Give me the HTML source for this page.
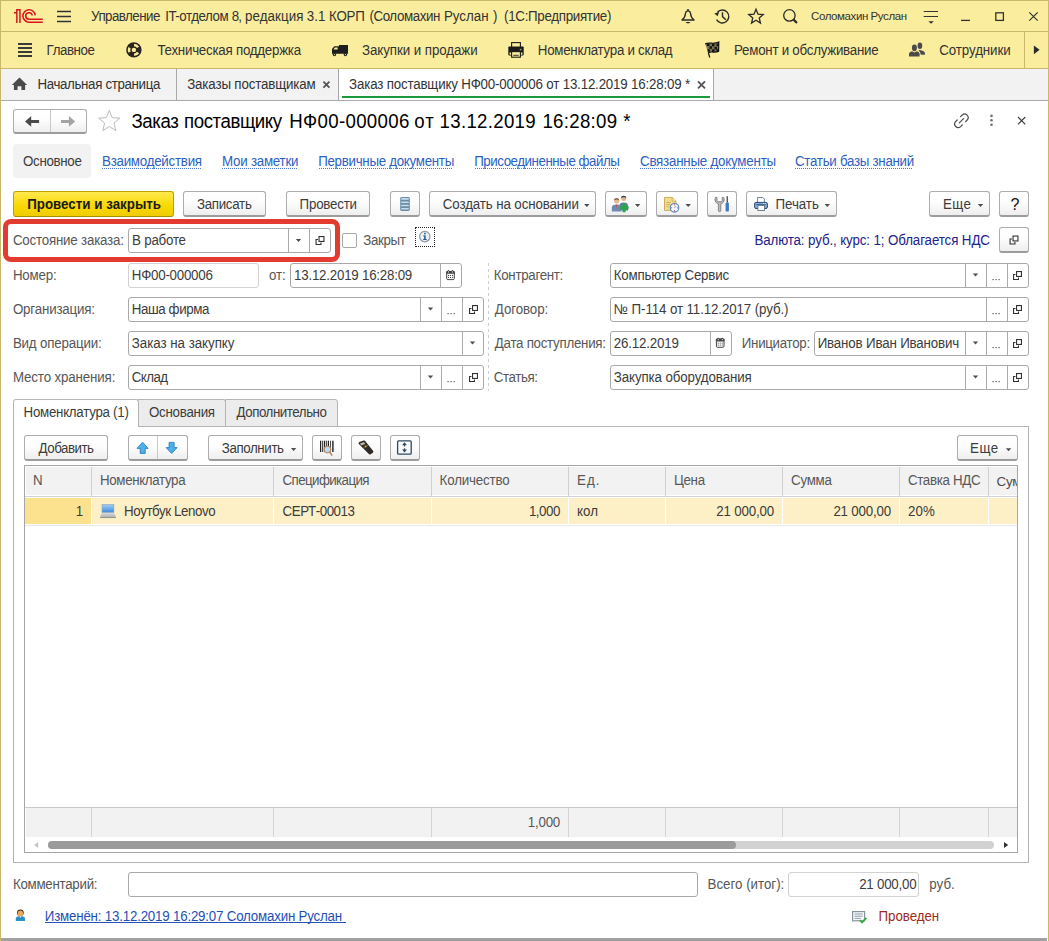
<!DOCTYPE html><html><head><meta charset="utf-8"><style>
html,body{margin:0;padding:0;}
body{width:1049px;height:941px;position:relative;overflow:hidden;background:#fff;font-family:"Liberation Sans",sans-serif;}
.t{position:absolute;white-space:nowrap;}
.b{position:absolute;box-sizing:border-box;}
svg.ov{position:absolute;left:0;top:0;}
.btn{border:1px solid #adadad;border-bottom:2px solid #9c9c9c;border-radius:3px;background:linear-gradient(#ffffff 0,#fdfdfd 45%,#eeeeee 100%);}
.inp{border:1px solid #a9a9a9;border-radius:3px;background:#fff;}
.inp.lt{border-color:#d2d2d2;}
</style></head><body>
<div class="b" style="left:0px;top:0px;width:1049px;height:1px;background:#c9b86c"></div>
<div class="b" style="left:0px;top:0px;width:1px;height:941px;background:#c9b86c"></div>
<div class="b" style="left:1048px;top:0px;width:1px;height:941px;background:#c9b86c"></div>
<div class="b" style="left:1px;top:1px;width:1047px;height:30px;background:#fbed9e"></div>
<div class="b" style="left:1px;top:31px;width:1047px;height:1px;background:#c9b86c"></div>
<div class="b" style="left:1px;top:32px;width:1047px;height:36px;background:#fbed9e"></div>
<div class="b" style="left:1px;top:68px;width:1047px;height:1px;background:#c9b86c"></div>
<div class="b" style="left:1024px;top:32px;width:1px;height:36px;background:#c9b86c"></div>
<div class="b" style="left:1px;top:69px;width:1047px;height:31px;background:#f2f2f2"></div>
<div class="b" style="left:339px;top:69px;width:374px;height:31px;background:#fff"></div>
<div class="b" style="left:176px;top:69px;width:1px;height:31px;background:#a8a8a8"></div>
<div class="b" style="left:338px;top:69px;width:1px;height:31px;background:#a8a8a8"></div>
<div class="b" style="left:713px;top:69px;width:1px;height:31px;background:#a8a8a8"></div>
<div class="b" style="left:342px;top:96px;width:368px;height:2px;background:#1c9a3c"></div>
<div class="b" style="left:1px;top:100px;width:1047px;height:1px;background:#aaaaaa"></div>
<div class="b" style="left:1px;top:938px;width:1046px;height:3px;background:#a0a0a0"></div>
<div class="b btn" style="left:13px;top:109px;width:74px;height:25px;"></div>
<div class="b" style="left:50px;top:110px;width:1px;height:22px;background:#c8c8c8"></div>
<div class="b" style="left:13px;top:144px;width:78px;height:34px;background:#f2f2f2;border-radius:4px"></div>
<div class="b" style="left:102px;top:168px;width:99px;height:1px;background:repeating-linear-gradient(90deg,#4a74c8 0 1px,transparent 1px 2px)"></div>
<div class="b" style="left:222px;top:168px;width:75px;height:1px;background:repeating-linear-gradient(90deg,#4a74c8 0 1px,transparent 1px 2px)"></div>
<div class="b" style="left:319px;top:168px;width:134px;height:1px;background:repeating-linear-gradient(90deg,#4a74c8 0 1px,transparent 1px 2px)"></div>
<div class="b" style="left:475px;top:168px;width:144px;height:1px;background:repeating-linear-gradient(90deg,#4a74c8 0 1px,transparent 1px 2px)"></div>
<div class="b" style="left:640px;top:168px;width:134px;height:1px;background:repeating-linear-gradient(90deg,#4a74c8 0 1px,transparent 1px 2px)"></div>
<div class="b" style="left:795px;top:168px;width:118px;height:1px;background:repeating-linear-gradient(90deg,#4a74c8 0 1px,transparent 1px 2px)"></div>
<div class="b" style="left:13px;top:191px;width:161px;height:26px;border:1px solid #bfa200;border-bottom-color:#a88e00;border-radius:3px;background:linear-gradient(#ffe94f,#f8d800 60%,#efcc00)"></div>
<div class="b btn" style="left:183px;top:191px;width:83px;height:26px;"></div>
<div class="b btn" style="left:286px;top:191px;width:84px;height:26px;"></div>
<div class="b btn" style="left:390px;top:191px;width:30px;height:26px;"></div>
<div class="b btn" style="left:429px;top:191px;width:167px;height:26px;"></div>
<div class="b btn" style="left:605px;top:191px;width:42px;height:26px;"></div>
<div class="b btn" style="left:656px;top:191px;width:42px;height:26px;"></div>
<div class="b btn" style="left:707px;top:191px;width:30px;height:26px;"></div>
<div class="b btn" style="left:746px;top:191px;width:91px;height:26px;"></div>
<div class="b btn" style="left:929px;top:191px;width:61px;height:26px;"></div>
<div class="b btn" style="left:999px;top:191px;width:30px;height:26px;"></div>
<div class="b" style="left:3px;top:219px;width:337px;height:43px;border:5px solid #e43b30;border-radius:8px"></div>
<div class="b inp" style="left:128px;top:228px;width:203px;height:25px;"></div>
<div class="b" style="left:288px;top:229px;width:1px;height:23px;background:#ababab"></div>
<div class="b" style="left:309px;top:229px;width:1px;height:23px;background:#ababab"></div>
<div class="b" style="left:342px;top:233px;width:15px;height:15px;border:1px solid #a9a9a9;border-radius:2px;background:#fff"></div>
<div class="b" style="left:415px;top:227px;width:20px;height:20px;border:1px dotted #222"></div>
<div class="b btn" style="left:999px;top:227px;width:30px;height:26px;"></div>
<div class="b inp lt" style="left:128px;top:263px;width:131px;height:25px;"></div>
<div class="b inp" style="left:290px;top:263px;width:172px;height:25px;"></div>
<div class="b" style="left:440px;top:264px;width:1px;height:23px;background:#ababab"></div>
<div class="b inp" style="left:128px;top:297px;width:356px;height:25px;"></div>
<div class="b" style="left:420px;top:298px;width:1px;height:23px;background:#ababab"></div>
<div class="b" style="left:441px;top:298px;width:1px;height:23px;background:#ababab"></div>
<div class="b" style="left:462px;top:298px;width:1px;height:23px;background:#ababab"></div>
<div class="b inp" style="left:128px;top:331px;width:356px;height:25px;"></div>
<div class="b" style="left:462px;top:332px;width:1px;height:23px;background:#ababab"></div>
<div class="b inp" style="left:128px;top:365px;width:356px;height:25px;"></div>
<div class="b" style="left:420px;top:366px;width:1px;height:23px;background:#ababab"></div>
<div class="b" style="left:441px;top:366px;width:1px;height:23px;background:#ababab"></div>
<div class="b" style="left:462px;top:366px;width:1px;height:23px;background:#ababab"></div>
<div class="b" style="left:488px;top:263px;width:1px;height:128px;background:repeating-linear-gradient(180deg,#cdcdcd 0 3px,transparent 3px 6px)"></div>
<div class="b inp" style="left:610px;top:263px;width:419px;height:25px;"></div>
<div class="b" style="left:965px;top:264px;width:1px;height:23px;background:#ababab"></div>
<div class="b" style="left:986px;top:264px;width:1px;height:23px;background:#ababab"></div>
<div class="b" style="left:1007px;top:264px;width:1px;height:23px;background:#ababab"></div>
<div class="b inp" style="left:610px;top:297px;width:419px;height:25px;"></div>
<div class="b" style="left:986px;top:298px;width:1px;height:23px;background:#ababab"></div>
<div class="b" style="left:1007px;top:298px;width:1px;height:23px;background:#ababab"></div>
<div class="b inp" style="left:610px;top:331px;width:122px;height:25px;"></div>
<div class="b" style="left:710px;top:332px;width:1px;height:23px;background:#ababab"></div>
<div class="b inp" style="left:814px;top:331px;width:215px;height:25px;"></div>
<div class="b" style="left:965px;top:332px;width:1px;height:23px;background:#ababab"></div>
<div class="b" style="left:986px;top:332px;width:1px;height:23px;background:#ababab"></div>
<div class="b" style="left:1007px;top:332px;width:1px;height:23px;background:#ababab"></div>
<div class="b inp" style="left:610px;top:365px;width:419px;height:25px;"></div>
<div class="b" style="left:965px;top:366px;width:1px;height:23px;background:#ababab"></div>
<div class="b" style="left:986px;top:366px;width:1px;height:23px;background:#ababab"></div>
<div class="b" style="left:1007px;top:366px;width:1px;height:23px;background:#ababab"></div>
<div class="b" style="left:13px;top:426px;width:1016px;height:437px;border:1px solid #b4b4b4;border-top:none"></div>
<div class="b" style="left:138px;top:426px;width:891px;height:1px;background:#b4b4b4"></div>
<div class="b" style="left:138px;top:399px;width:88px;height:28px;border:1px solid #b4b4b4;border-left:none;border-top-right-radius:3px;background:#ececec"></div>
<div class="b" style="left:225px;top:399px;width:113px;height:28px;border:1px solid #b4b4b4;border-top-right-radius:3px;background:#ececec"></div>
<div class="b" style="left:13px;top:399px;width:126px;height:28px;border:1px solid #b4b4b4;border-bottom:none;border-top-left-radius:3px;border-top-right-radius:3px;background:#fff"></div>
<div class="b btn" style="left:24px;top:435px;width:84px;height:26px;"></div>
<div class="b btn" style="left:128px;top:435px;width:60px;height:26px;"></div>
<div class="b" style="left:157px;top:436px;width:1px;height:23px;background:#c8c8c8"></div>
<div class="b btn" style="left:208px;top:435px;width:95px;height:26px;"></div>
<div class="b btn" style="left:312px;top:435px;width:30px;height:26px;"></div>
<div class="b btn" style="left:351px;top:435px;width:30px;height:26px;"></div>
<div class="b btn" style="left:390px;top:435px;width:30px;height:26px;"></div>
<div class="b btn" style="left:957px;top:435px;width:61px;height:26px;"></div>
<div class="b" style="left:24px;top:465px;width:994px;height:388px;border:1px solid #a6a6a6;background:#fff"></div>
<div class="b" style="left:26px;top:467px;width:991px;height:28px;background:#f2f2f2"></div>
<div class="b" style="left:25px;top:496px;width:992px;height:1px;background:#d4d4d4"></div>
<div class="b" style="left:91px;top:467px;width:1px;height:29px;background:#d0d0d0"></div>
<div class="b" style="left:273px;top:467px;width:1px;height:29px;background:#d0d0d0"></div>
<div class="b" style="left:431px;top:467px;width:1px;height:29px;background:#d0d0d0"></div>
<div class="b" style="left:568px;top:467px;width:1px;height:29px;background:#d0d0d0"></div>
<div class="b" style="left:665px;top:467px;width:1px;height:29px;background:#d0d0d0"></div>
<div class="b" style="left:782px;top:467px;width:1px;height:29px;background:#d0d0d0"></div>
<div class="b" style="left:899px;top:467px;width:1px;height:29px;background:#d0d0d0"></div>
<div class="b" style="left:988px;top:467px;width:1px;height:29px;background:#d0d0d0"></div>
<div class="b" style="left:25px;top:498px;width:992px;height:26px;background:#fdf0c6"></div>
<div class="b" style="left:25px;top:498px;width:66px;height:26px;background:#fce28f"></div>
<div class="b" style="left:91px;top:498px;width:1px;height:26px;background:#ffffff"></div>
<div class="b" style="left:273px;top:498px;width:1px;height:26px;background:#ffffff"></div>
<div class="b" style="left:431px;top:498px;width:1px;height:26px;background:#ffffff"></div>
<div class="b" style="left:568px;top:498px;width:1px;height:26px;background:#ffffff"></div>
<div class="b" style="left:665px;top:498px;width:1px;height:26px;background:#ffffff"></div>
<div class="b" style="left:782px;top:498px;width:1px;height:26px;background:#ffffff"></div>
<div class="b" style="left:899px;top:498px;width:1px;height:26px;background:#ffffff"></div>
<div class="b" style="left:988px;top:498px;width:1px;height:26px;background:#ffffff"></div>
<div class="b" style="left:25px;top:525px;width:992px;height:1px;background:#e8e8e8"></div>
<div class="b" style="left:989px;top:467px;width:28px;height:28px;background:#f2f2f2;overflow:hidden"></div>
<div style="position:absolute;left:989px;top:467px;width:28px;height:28px;overflow:hidden"><div class="t" style="left:7.5px;top:7px;font-size:13.33px;line-height:15px;color:#4d4d4d;letter-spacing:-0.2px">Сумма НДС</div></div>
<div class="b" style="left:25px;top:807px;width:992px;height:1px;background:#c8c8c8"></div>
<div class="b" style="left:26px;top:808px;width:991px;height:29px;background:#f2f2f2"></div>
<div class="b" style="left:91px;top:808px;width:1px;height:29px;background:#d4d4d4"></div>
<div class="b" style="left:273px;top:808px;width:1px;height:29px;background:#d4d4d4"></div>
<div class="b" style="left:431px;top:808px;width:1px;height:29px;background:#d4d4d4"></div>
<div class="b" style="left:568px;top:808px;width:1px;height:29px;background:#d4d4d4"></div>
<div class="b" style="left:665px;top:808px;width:1px;height:29px;background:#d4d4d4"></div>
<div class="b" style="left:782px;top:808px;width:1px;height:29px;background:#d4d4d4"></div>
<div class="b" style="left:899px;top:808px;width:1px;height:29px;background:#d4d4d4"></div>
<div class="b" style="left:988px;top:808px;width:1px;height:29px;background:#d4d4d4"></div>
<div class="b" style="left:48px;top:841px;width:946px;height:8px;background:#d2d2d2;border-radius:4px"></div>
<div class="b" style="left:48px;top:841px;width:688px;height:8px;background:#9b9b9b;border-radius:4px"></div>
<div class="b inp" style="left:128px;top:872px;width:570px;height:25px;"></div>
<div class="b inp lt" style="left:788px;top:872px;width:131px;height:25px;"></div>
<div class="b" style="left:45px;top:922px;width:301px;height:1px;background:#2454b8"></div>
<div class="t" style="left:91.10px;top:9px;font-size:13.33px;line-height:15px;color:#333;font-weight:normal;letter-spacing:-0.544px;font-family:'Liberation Sans';transform:scaleY(1.07);transform-origin:0 12px;">Управление</div>
<div class="t" style="left:165.20px;top:9px;font-size:13.33px;line-height:15px;color:#333;font-weight:normal;letter-spacing:-0.467px;font-family:'Liberation Sans';transform:scaleY(1.07);transform-origin:0 12px;">IT-отделом</div>
<div class="t" style="left:231.80px;top:9px;font-size:13.33px;line-height:15px;color:#333;font-weight:normal;letter-spacing:-1.000px;font-family:'Liberation Sans';transform:scaleY(1.07);transform-origin:0 12px;">8,</div>
<div class="t" style="left:245.00px;top:9px;font-size:13.33px;line-height:15px;color:#333;font-weight:normal;letter-spacing:0.086px;font-family:'Liberation Sans';transform:scaleY(1.07);transform-origin:0 12px;">редакция</div>
<div class="t" style="left:306.80px;top:9px;font-size:13.33px;line-height:15px;color:#333;font-weight:normal;letter-spacing:0.050px;font-family:'Liberation Sans';transform:scaleY(1.07);transform-origin:0 12px;">3.1</div>
<div class="t" style="left:329.10px;top:9px;font-size:13.33px;line-height:15px;color:#333;font-weight:normal;letter-spacing:-0.233px;font-family:'Liberation Sans';transform:scaleY(1.07);transform-origin:0 12px;">КОРП</div>
<div class="t" style="left:369.40px;top:9px;font-size:13.33px;line-height:15px;color:#333;font-weight:normal;letter-spacing:-0.400px;font-family:'Liberation Sans';transform:scaleY(1.07);transform-origin:0 12px;">(Соломахин</div>
<div class="t" style="left:444.00px;top:9px;font-size:13.33px;line-height:15px;color:#333;font-weight:normal;letter-spacing:-0.020px;font-family:'Liberation Sans';transform:scaleY(1.07);transform-origin:0 12px;">Руслан</div>
<div class="t" style="left:493.10px;top:9px;font-size:13.33px;line-height:15px;color:#333;font-weight:normal;letter-spacing:-0.230px;font-family:'Liberation Sans';transform:scaleY(1.07);transform-origin:0 12px;">)</div>
<div class="t" style="left:504.10px;top:9px;font-size:13.33px;line-height:15px;color:#333;font-weight:normal;letter-spacing:-0.300px;font-family:'Liberation Sans';transform:scaleY(1.07);transform-origin:0 12px;">(1С:Предприятие)</div>
<div class="t" style="left:811.10px;top:10px;font-size:11.5px;line-height:12px;color:#333;font-weight:normal;letter-spacing:-0.420px;font-family:'Liberation Sans';">Соломахин Руслан</div>
<div class="t" style="left:46.60px;top:43px;font-size:13.33px;line-height:15px;color:#333;font-weight:normal;letter-spacing:-0.433px;font-family:'Liberation Sans';transform:scaleY(1.07);transform-origin:0 12px;">Главное</div>
<div class="t" style="left:157.40px;top:43px;font-size:13.33px;line-height:15px;color:#333;font-weight:normal;letter-spacing:-0.245px;font-family:'Liberation Sans';transform:scaleY(1.07);transform-origin:0 12px;">Техническая поддержка</div>
<div class="t" style="left:362.00px;top:43px;font-size:13.33px;line-height:15px;color:#333;font-weight:normal;letter-spacing:-0.069px;font-family:'Liberation Sans';transform:scaleY(1.07);transform-origin:0 12px;">Закупки и продажи</div>
<div class="t" style="left:537.80px;top:43px;font-size:13.33px;line-height:15px;color:#333;font-weight:normal;letter-spacing:-0.268px;font-family:'Liberation Sans';transform:scaleY(1.07);transform-origin:0 12px;">Номенклатура и склад</div>
<div class="t" style="left:734.00px;top:43px;font-size:13.33px;line-height:15px;color:#333;font-weight:normal;letter-spacing:-0.250px;font-family:'Liberation Sans';transform:scaleY(1.07);transform-origin:0 12px;">Ремонт и обслуживание</div>
<div class="t" style="left:939.20px;top:43px;font-size:13.33px;line-height:15px;color:#333;font-weight:normal;letter-spacing:-0.078px;font-family:'Liberation Sans';transform:scaleY(1.07);transform-origin:0 12px;">Сотрудники</div>
<div class="t" style="left:37.40px;top:77px;font-size:13.33px;line-height:15px;color:#333;font-weight:normal;letter-spacing:-0.353px;font-family:'Liberation Sans';transform:scaleY(1.07);transform-origin:0 12px;">Начальная страница</div>
<div class="t" style="left:187.20px;top:77px;font-size:13.33px;line-height:15px;color:#333;font-weight:normal;letter-spacing:-0.153px;font-family:'Liberation Sans';transform:scaleY(1.07);transform-origin:0 12px;">Заказы поставщикам</div>
<div class="t" style="left:349.10px;top:77px;font-size:13.33px;line-height:15px;color:#333;font-weight:normal;letter-spacing:-0.179px;font-family:'Liberation Sans';transform:scaleY(1.07);transform-origin:0 12px;">Заказ поставщику НФ00-000006 от 13.12.2019 16:28:09 *</div>
<div class="t" style="left:131.40px;top:111px;font-size:18.67px;line-height:21px;color:#000;font-weight:normal;letter-spacing:-0.375px;font-family:'Liberation Sans';transform:scaleY(1.07);transform-origin:0 17px;">Заказ</div>
<div class="t" style="left:184.10px;top:111px;font-size:18.67px;line-height:21px;color:#000;font-weight:normal;letter-spacing:-0.433px;font-family:'Liberation Sans';transform:scaleY(1.07);transform-origin:0 17px;">поставщику</div>
<div class="t" style="left:289.30px;top:111px;font-size:18.67px;line-height:21px;color:#000;font-weight:normal;letter-spacing:0.310px;font-family:'Liberation Sans';transform:scaleY(1.07);transform-origin:0 17px;">НФ00-000006</div>
<div class="t" style="left:414.30px;top:111px;font-size:18.67px;line-height:21px;color:#000;font-weight:normal;letter-spacing:0.900px;font-family:'Liberation Sans';transform:scaleY(1.07);transform-origin:0 17px;">от</div>
<div class="t" style="left:439.60px;top:111px;font-size:18.67px;line-height:21px;color:#000;font-weight:normal;letter-spacing:0.300px;font-family:'Liberation Sans';transform:scaleY(1.07);transform-origin:0 17px;">13.12.2019</div>
<div class="t" style="left:542.40px;top:111px;font-size:18.67px;line-height:21px;color:#000;font-weight:normal;letter-spacing:0.300px;font-family:'Liberation Sans';transform:scaleY(1.07);transform-origin:0 17px;">16:28:09</div>
<div class="t" style="left:623.30px;top:111px;font-size:18.67px;line-height:21px;color:#000;font-weight:normal;letter-spacing:0.000px;font-family:'Liberation Sans';transform:scaleY(1.07);transform-origin:0 17px;">*</div>
<div class="t" style="left:23.00px;top:154px;font-size:13.33px;line-height:15px;color:#3c3c3c;font-weight:normal;letter-spacing:-0.314px;font-family:'Liberation Sans';transform:scaleY(1.07);transform-origin:0 12px;">Основное</div>
<div class="t" style="left:102.00px;top:154px;font-size:13.33px;line-height:15px;color:#2d5fc2;font-weight:normal;letter-spacing:-0.246px;font-family:'Liberation Sans';transform:scaleY(1.07);transform-origin:0 12px;">Взаимодействия</div>
<div class="t" style="left:222.10px;top:154px;font-size:13.33px;line-height:15px;color:#2d5fc2;font-weight:normal;letter-spacing:-0.250px;font-family:'Liberation Sans';transform:scaleY(1.07);transform-origin:0 12px;">Мои заметки</div>
<div class="t" style="left:318.20px;top:154px;font-size:13.33px;line-height:15px;color:#2d5fc2;font-weight:normal;letter-spacing:-0.289px;font-family:'Liberation Sans';transform:scaleY(1.07);transform-origin:0 12px;">Первичные документы</div>
<div class="t" style="left:474.20px;top:154px;font-size:13.33px;line-height:15px;color:#2d5fc2;font-weight:normal;letter-spacing:-0.453px;font-family:'Liberation Sans';transform:scaleY(1.07);transform-origin:0 12px;">Присоединенные файлы</div>
<div class="t" style="left:640.00px;top:154px;font-size:13.33px;line-height:15px;color:#2d5fc2;font-weight:normal;letter-spacing:-0.217px;font-family:'Liberation Sans';transform:scaleY(1.07);transform-origin:0 12px;">Связанные документы</div>
<div class="t" style="left:795.00px;top:154px;font-size:13.33px;line-height:15px;color:#2d5fc2;font-weight:normal;letter-spacing:-0.282px;font-family:'Liberation Sans';transform:scaleY(1.07);transform-origin:0 12px;">Статьи базы знаний</div>
<div class="t" style="left:27.20px;top:197px;font-size:13.33px;line-height:15px;color:#1a1a1a;font-weight:bold;letter-spacing:0.012px;font-family:'Liberation Sans';transform:scaleY(1.07);transform-origin:0 12px;">Провести и закрыть</div>
<div class="t" style="left:196.90px;top:197px;font-size:13.33px;line-height:15px;color:#3c3c3c;font-weight:normal;letter-spacing:-0.286px;font-family:'Liberation Sans';transform:scaleY(1.07);transform-origin:0 12px;">Записать</div>
<div class="t" style="left:299.60px;top:197px;font-size:13.33px;line-height:15px;color:#3c3c3c;font-weight:normal;letter-spacing:-0.229px;font-family:'Liberation Sans';transform:scaleY(1.07);transform-origin:0 12px;">Провести</div>
<div class="t" style="left:442.80px;top:197px;font-size:13.33px;line-height:15px;color:#3c3c3c;font-weight:normal;letter-spacing:-0.116px;font-family:'Liberation Sans';transform:scaleY(1.07);transform-origin:0 12px;">Создать на основании</div>
<div class="t" style="left:775.50px;top:197px;font-size:13.33px;line-height:15px;color:#3c3c3c;font-weight:normal;letter-spacing:-0.060px;font-family:'Liberation Sans';transform:scaleY(1.07);transform-origin:0 12px;">Печать</div>
<div class="t" style="left:942.90px;top:197px;font-size:13.33px;line-height:15px;color:#3c3c3c;font-weight:normal;letter-spacing:0.500px;font-family:'Liberation Sans';transform:scaleY(1.07);transform-origin:0 12px;">Еще</div>
<div class="t" style="left:1010.40px;top:196px;font-size:16px;line-height:17px;color:#111;font-weight:normal;letter-spacing:0.000px;font-family:'Liberation Sans';">?</div>
<div class="t" style="left:12.90px;top:233px;font-size:13.33px;line-height:15px;color:#575757;font-weight:normal;letter-spacing:-0.206px;font-family:'Liberation Sans';transform:scaleY(1.07);transform-origin:0 12px;">Состояние заказа:</div>
<div class="t" style="left:132.10px;top:233px;font-size:13.33px;line-height:15px;color:#3c3c3c;font-weight:normal;letter-spacing:-0.230px;font-family:'Liberation Sans';transform:scaleY(1.07);transform-origin:0 12px;">В работе</div>
<div class="t" style="left:363.20px;top:233px;font-size:13.33px;line-height:15px;color:#575757;font-weight:normal;letter-spacing:-0.360px;font-family:'Liberation Sans';transform:scaleY(1.07);transform-origin:0 12px;">Закрыт</div>
<div class="t" style="left:754.40px;top:233px;font-size:13.33px;line-height:15px;color:#21218a;font-weight:normal;letter-spacing:-0.111px;font-family:'Liberation Sans';transform:scaleY(1.07);transform-origin:0 12px;">Валюта: руб., курс: 1; Облагается НДС</div>
<div class="t" style="left:12.90px;top:268px;font-size:13.33px;line-height:15px;color:#575757;font-weight:normal;letter-spacing:-0.200px;font-family:'Liberation Sans';transform:scaleY(1.07);transform-origin:0 12px;">Номер:</div>
<div class="t" style="left:12.90px;top:302px;font-size:13.33px;line-height:15px;color:#575757;font-weight:normal;letter-spacing:-0.173px;font-family:'Liberation Sans';transform:scaleY(1.07);transform-origin:0 12px;">Организация:</div>
<div class="t" style="left:12.90px;top:336px;font-size:13.33px;line-height:15px;color:#575757;font-weight:normal;letter-spacing:-0.183px;font-family:'Liberation Sans';transform:scaleY(1.07);transform-origin:0 12px;">Вид операции:</div>
<div class="t" style="left:12.90px;top:370px;font-size:13.33px;line-height:15px;color:#575757;font-weight:normal;letter-spacing:-0.136px;font-family:'Liberation Sans';transform:scaleY(1.07);transform-origin:0 12px;">Место хранения:</div>
<div class="t" style="left:131.80px;top:268px;font-size:13.33px;line-height:15px;color:#3c3c3c;font-weight:normal;letter-spacing:-0.250px;font-family:'Liberation Sans';transform:scaleY(1.07);transform-origin:0 12px;">НФ00-000006</div>
<div class="t" style="left:269.10px;top:268px;font-size:13.33px;line-height:15px;color:#575757;font-weight:normal;letter-spacing:-0.150px;font-family:'Liberation Sans';transform:scaleY(1.07);transform-origin:0 12px;">от:</div>
<div class="t" style="left:294.10px;top:268px;font-size:13.33px;line-height:15px;color:#3c3c3c;font-weight:normal;letter-spacing:-0.228px;font-family:'Liberation Sans';transform:scaleY(1.07);transform-origin:0 12px;">13.12.2019 16:28:09</div>
<div class="t" style="left:131.80px;top:302px;font-size:13.33px;line-height:15px;color:#3c3c3c;font-weight:normal;letter-spacing:-0.411px;font-family:'Liberation Sans';transform:scaleY(1.07);transform-origin:0 12px;">Наша фирма</div>
<div class="t" style="left:131.80px;top:336px;font-size:13.33px;line-height:15px;color:#3c3c3c;font-weight:normal;letter-spacing:-0.033px;font-family:'Liberation Sans';transform:scaleY(1.07);transform-origin:0 12px;">Заказ на закупку</div>
<div class="t" style="left:131.80px;top:370px;font-size:13.33px;line-height:15px;color:#3c3c3c;font-weight:normal;letter-spacing:-0.575px;font-family:'Liberation Sans';transform:scaleY(1.07);transform-origin:0 12px;">Склад</div>
<div class="t" style="left:493.80px;top:268px;font-size:13.33px;line-height:15px;color:#575757;font-weight:normal;letter-spacing:-0.310px;font-family:'Liberation Sans';transform:scaleY(1.07);transform-origin:0 12px;">Контрагент:</div>
<div class="t" style="left:494.80px;top:302px;font-size:13.33px;line-height:15px;color:#575757;font-weight:normal;letter-spacing:-0.086px;font-family:'Liberation Sans';transform:scaleY(1.07);transform-origin:0 12px;">Договор:</div>
<div class="t" style="left:494.80px;top:336px;font-size:13.33px;line-height:15px;color:#575757;font-weight:normal;letter-spacing:-0.275px;font-family:'Liberation Sans';transform:scaleY(1.07);transform-origin:0 12px;">Дата поступления:</div>
<div class="t" style="left:493.80px;top:370px;font-size:13.33px;line-height:15px;color:#575757;font-weight:normal;letter-spacing:-0.417px;font-family:'Liberation Sans';transform:scaleY(1.07);transform-origin:0 12px;">Статья:</div>
<div class="t" style="left:613.80px;top:268px;font-size:13.33px;line-height:15px;color:#3c3c3c;font-weight:normal;letter-spacing:-0.200px;font-family:'Liberation Sans';transform:scaleY(1.07);transform-origin:0 12px;">Компьютер Сервис</div>
<div class="t" style="left:613.80px;top:302px;font-size:13.33px;line-height:15px;color:#3c3c3c;font-weight:normal;letter-spacing:-0.107px;font-family:'Liberation Sans';transform:scaleY(1.07);transform-origin:0 12px;">№ П-114 от 11.12.2017 (руб.)</div>
<div class="t" style="left:613.80px;top:336px;font-size:13.33px;line-height:15px;color:#3c3c3c;font-weight:normal;letter-spacing:-0.167px;font-family:'Liberation Sans';transform:scaleY(1.07);transform-origin:0 12px;">26.12.2019</div>
<div class="t" style="left:741.80px;top:336px;font-size:13.33px;line-height:15px;color:#575757;font-weight:normal;letter-spacing:-0.300px;font-family:'Liberation Sans';transform:scaleY(1.07);transform-origin:0 12px;">Инициатор:</div>
<div class="t" style="left:817.70px;top:336px;font-size:13.33px;line-height:15px;color:#3c3c3c;font-weight:normal;letter-spacing:-0.168px;font-family:'Liberation Sans';transform:scaleY(1.07);transform-origin:0 12px;">Иванов Иван Иванович</div>
<div class="t" style="left:613.80px;top:370px;font-size:13.33px;line-height:15px;color:#3c3c3c;font-weight:normal;letter-spacing:-0.111px;font-family:'Liberation Sans';transform:scaleY(1.07);transform-origin:0 12px;">Закупка оборудования</div>
<div class="t" style="left:23.60px;top:405px;font-size:13.33px;line-height:15px;color:#3c3c3c;font-weight:normal;letter-spacing:-0.280px;font-family:'Liberation Sans';transform:scaleY(1.07);transform-origin:0 12px;">Номенклатура (1)</div>
<div class="t" style="left:148.90px;top:405px;font-size:13.33px;line-height:15px;color:#3c3c3c;font-weight:normal;letter-spacing:-0.250px;font-family:'Liberation Sans';transform:scaleY(1.07);transform-origin:0 12px;">Основания</div>
<div class="t" style="left:236.50px;top:405px;font-size:13.33px;line-height:15px;color:#3c3c3c;font-weight:normal;letter-spacing:-0.458px;font-family:'Liberation Sans';transform:scaleY(1.07);transform-origin:0 12px;">Дополнительно</div>
<div class="t" style="left:38.60px;top:441px;font-size:13.33px;line-height:15px;color:#3c3c3c;font-weight:normal;letter-spacing:-0.500px;font-family:'Liberation Sans';transform:scaleY(1.07);transform-origin:0 12px;">Добавить</div>
<div class="t" style="left:221.80px;top:441px;font-size:13.33px;line-height:15px;color:#3c3c3c;font-weight:normal;letter-spacing:-0.400px;font-family:'Liberation Sans';transform:scaleY(1.07);transform-origin:0 12px;">Заполнить</div>
<div class="t" style="left:970.10px;top:441px;font-size:13.33px;line-height:15px;color:#3c3c3c;font-weight:normal;letter-spacing:0.500px;font-family:'Liberation Sans';transform:scaleY(1.07);transform-origin:0 12px;">Еще</div>
<div class="t" style="left:33.00px;top:473px;font-size:13.33px;line-height:15px;color:#575757;font-weight:normal;letter-spacing:-0.230px;font-family:'Liberation Sans';transform:scaleY(1.07);transform-origin:0 12px;">N</div>
<div class="t" style="left:100.00px;top:473px;font-size:13.33px;line-height:15px;color:#575757;font-weight:normal;letter-spacing:-0.355px;font-family:'Liberation Sans';transform:scaleY(1.07);transform-origin:0 12px;">Номенклатура</div>
<div class="t" style="left:282.60px;top:473px;font-size:13.33px;line-height:15px;color:#575757;font-weight:normal;letter-spacing:-0.609px;font-family:'Liberation Sans';transform:scaleY(1.07);transform-origin:0 12px;">Спецификация</div>
<div class="t" style="left:439.60px;top:473px;font-size:13.33px;line-height:15px;color:#575757;font-weight:normal;letter-spacing:-0.167px;font-family:'Liberation Sans';transform:scaleY(1.07);transform-origin:0 12px;">Количество</div>
<div class="t" style="left:577.00px;top:473px;font-size:13.33px;line-height:15px;color:#575757;font-weight:normal;letter-spacing:1.000px;font-family:'Liberation Sans';transform:scaleY(1.07);transform-origin:0 12px;">Ед.</div>
<div class="t" style="left:674.00px;top:473px;font-size:13.33px;line-height:15px;color:#575757;font-weight:normal;letter-spacing:-0.333px;font-family:'Liberation Sans';transform:scaleY(1.07);transform-origin:0 12px;">Цена</div>
<div class="t" style="left:791.10px;top:473px;font-size:13.33px;line-height:15px;color:#575757;font-weight:normal;letter-spacing:-0.275px;font-family:'Liberation Sans';transform:scaleY(1.07);transform-origin:0 12px;">Сумма</div>
<div class="t" style="left:907.90px;top:473px;font-size:13.33px;line-height:15px;color:#575757;font-weight:normal;letter-spacing:-0.311px;font-family:'Liberation Sans';transform:scaleY(1.07);transform-origin:0 12px;">Ставка НДС</div>
<div class="t" style="left:75.80px;top:504px;font-size:13.33px;line-height:15px;color:#3c3c3c;font-weight:normal;letter-spacing:-0.230px;font-family:'Liberation Sans';transform:scaleY(1.07);transform-origin:0 12px;">1</div>
<div class="t" style="left:124.10px;top:504px;font-size:13.33px;line-height:15px;color:#3c3c3c;font-weight:normal;letter-spacing:-0.408px;font-family:'Liberation Sans';transform:scaleY(1.07);transform-origin:0 12px;">Ноутбук Lenovo</div>
<div class="t" style="left:282.60px;top:504px;font-size:13.33px;line-height:15px;color:#3c3c3c;font-weight:normal;letter-spacing:-0.456px;font-family:'Liberation Sans';transform:scaleY(1.07);transform-origin:0 12px;">СЕРТ-00013</div>
<div class="t" style="left:528.90px;top:504px;font-size:13.33px;line-height:15px;color:#3c3c3c;font-weight:normal;letter-spacing:-0.475px;font-family:'Liberation Sans';transform:scaleY(1.07);transform-origin:0 12px;">1,000</div>
<div class="t" style="left:577.00px;top:504px;font-size:13.33px;line-height:15px;color:#3c3c3c;font-weight:normal;letter-spacing:0.100px;font-family:'Liberation Sans';transform:scaleY(1.07);transform-origin:0 12px;">кол</div>
<div class="t" style="left:716.30px;top:504px;font-size:13.33px;line-height:15px;color:#3c3c3c;font-weight:normal;letter-spacing:-0.188px;font-family:'Liberation Sans';transform:scaleY(1.07);transform-origin:0 12px;">21 000,00</div>
<div class="t" style="left:833.40px;top:504px;font-size:13.33px;line-height:15px;color:#3c3c3c;font-weight:normal;letter-spacing:-0.188px;font-family:'Liberation Sans';transform:scaleY(1.07);transform-origin:0 12px;">21 000,00</div>
<div class="t" style="left:907.90px;top:504px;font-size:13.33px;line-height:15px;color:#3c3c3c;font-weight:normal;letter-spacing:0.200px;font-family:'Liberation Sans';transform:scaleY(1.07);transform-origin:0 12px;">20%</div>
<div class="t" style="left:527.82px;top:815px;font-size:13.33px;line-height:15px;color:#575757;font-weight:normal;letter-spacing:-0.230px;font-family:'Liberation Sans';transform:scaleY(1.07);transform-origin:0 12px;">1,000</div>
<div class="t" style="left:12.90px;top:877px;font-size:13.33px;line-height:15px;color:#575757;font-weight:normal;letter-spacing:-0.273px;font-family:'Liberation Sans';transform:scaleY(1.07);transform-origin:0 12px;">Комментарий:</div>
<div class="t" style="left:707.60px;top:877px;font-size:13.33px;line-height:15px;color:#575757;font-weight:normal;letter-spacing:-0.017px;font-family:'Liberation Sans';transform:scaleY(1.07);transform-origin:0 12px;">Всего (итог):</div>
<div class="t" style="left:859.14px;top:877px;font-size:13.33px;line-height:15px;color:#3c3c3c;font-weight:normal;letter-spacing:-0.230px;font-family:'Liberation Sans';transform:scaleY(1.07);transform-origin:0 12px;">21 000,00</div>
<div class="t" style="left:929.20px;top:877px;font-size:13.33px;line-height:15px;color:#575757;font-weight:normal;letter-spacing:0.067px;font-family:'Liberation Sans';transform:scaleY(1.07);transform-origin:0 12px;">руб.</div>
<div class="t" style="left:44.80px;top:909px;font-size:13.33px;line-height:15px;color:#1f4fb5;font-weight:normal;letter-spacing:-0.202px;font-family:'Liberation Sans';transform:scaleY(1.07);transform-origin:0 12px;">Изменён: 13.12.2019 16:29:07 Соломахин Руслан</div>
<div class="t" style="left:878.50px;top:909px;font-size:13.33px;line-height:15px;color:#9c2b22;font-weight:normal;letter-spacing:-0.043px;font-family:'Liberation Sans';transform:scaleY(1.07);transform-origin:0 12px;">Проведен</div>
<svg class="ov" width="1049" height="941" viewBox="0 0 1049 941"><g fill="none" stroke="#d8141c" stroke-width="1.5"><path d="M14,12.85 H16.85 M16.85,22.9 V9.75 H19.95 V22.9"/><path d="M35.3,15.4 A6.2,6.2 0 1 0 29.1,22.15 H42.8"/><path d="M32.3,15.4 A3.3,3.3 0 1 0 29.1,19.25 H42.8"/></g>
<g stroke="#333" stroke-width="1.4"><path d="M57,11.5H71M57,16.5H71M57,21.5H71"/></g>
<g fill="none" stroke="#2b2b2b" stroke-width="1.3" stroke-linejoin="round"><path d="M688,10.9 C686.4,10.9 685.7,11.9 685.5,13.4 C685.2,16.4 684.6,18.2 681.9,20 H694.1 C691.4,18.2 690.8,16.4 690.5,13.4 C690.3,11.9 689.6,10.9 688,10.9 Z"/></g><circle cx="688" cy="9.9" r="1" fill="#2b2b2b"/><path d="M685.4,22.1 Q688,24.8 690.6,22.1 Z" fill="#2b2b2b"/>
<g fill="none" stroke="#2b2b2b" stroke-width="1.4"><path d="M716.6,19.6 A6.5,6.5 0 1 0 717.4,12.2"/><path d="M722.5,12.2 V16.6 L725.8,19.8"/></g><path d="M714.3,13.6 L719.2,12.0 L717.6,16.2 Z" fill="#2b2b2b"/>
<path d="M756.00,9.30 L758.00,14.15 L763.23,14.55 L759.23,17.95 L760.47,23.05 L756.00,20.30 L751.53,23.05 L752.77,17.95 L748.77,14.55 L754.00,14.15 Z" fill="none" stroke="#2b2b2b" stroke-width="1.3" stroke-linejoin="miter"/>
<circle cx="789.4" cy="15.4" r="5.7" fill="none" stroke="#2b2b2b" stroke-width="1.3"/><path d="M793.6,19.6 L797,23" stroke="#2b2b2b" stroke-width="2.2"/>
<path d="M923.7,11.5H938M923.7,16.5H938" stroke="#333" stroke-width="1.2"/><path d="M928.4,21.2H933.8L931.1,23.8Z" fill="#333"/>
<path d="M961,20.4H970" stroke="#333" stroke-width="1.3"/><rect x="995.8" y="12.8" width="7.6" height="7.6" fill="none" stroke="#333" stroke-width="1.3"/><path d="M1029.3,12.3L1037.7,20.7M1037.7,12.3L1029.3,20.7" stroke="#333" stroke-width="1.2"/>
<path d="M18,44H32M18,48H32M18,52H32M18,56H32" stroke="#3a3a3a" stroke-width="2"/>
<circle cx="133.9" cy="49.9" r="7.7" fill="#2a2521"/><circle cx="133.9" cy="49.9" r="2.2" fill="#fbed9e"/><g stroke="#fbed9e" stroke-width="2.5" fill="none"><path d="M129.57,52.20 A4.9,4.9 0 0 1 129.57,47.60"/><path d="M134.07,45.00 A4.9,4.9 0 0 1 138.06,47.30"/><path d="M138.06,52.50 A4.9,4.9 0 0 1 134.07,54.80"/></g>
<path d="M339,45 H348 V53.8 H332 V49 L334.3,46.3 H339 Z" fill="#1e1e1e"/><path d="M334.8,47.4 H337.6 V49.6 H333.6 Z" fill="#fbed9e"/><circle cx="334.4" cy="54.6" r="1.7" fill="#1e1e1e"/><circle cx="345.4" cy="54.6" r="1.7" fill="#1e1e1e"/><circle cx="334.4" cy="54.6" r="0.6" fill="#fbed9e"/><circle cx="345.4" cy="54.6" r="0.6" fill="#fbed9e"/>
<rect x="511.6" y="42.6" width="8.8" height="5" fill="none" stroke="#1a1a1a" stroke-width="1.1"/><rect x="508.3" y="46.5" width="15.4" height="9" rx="1" fill="#1a1a1a"/><rect x="509.6" y="52.5" width="12.8" height="2.2" fill="#fbed9e"/><rect x="511.6" y="51.6" width="8.8" height="5.6" fill="#fbed9e" stroke="#1a1a1a" stroke-width="1.1"/><path d="M513.3,55.3H518.6" stroke="#1a1a1a" stroke-width="0.9"/><rect x="519.8" y="48.8" width="1.6" height="1.6" fill="#a09870"/>
<g><path d="M705.2,44 C708,42 711,43.5 714,43.2 C716,43 717.5,42.5 718.8,42 L718.6,51.3 C716.5,52.5 714,52 711.6,52 C710,52 709,52.4 708.4,53 L709.8,57.5" fill="none" stroke="#111" stroke-width="1.2"/><path d="M705.2,44 L708.4,53 C709,52.4 710,52 711.6,52 C714,52 716.5,52.5 718.6,51.3 L718.8,42 C717.5,42.5 716,43 714,43.2 C711,43.5 708,42 705.2,44Z" fill="#111" opacity="0.55"/><rect x="707" y="43.5" width="2.5" height="2.5" fill="#111"/><rect x="712" y="43.8" width="2.5" height="2.5" fill="#111"/><rect x="716.5" y="43.5" width="2.2" height="2.5" fill="#111"/><rect x="709.5" y="46.3" width="2.5" height="2.5" fill="#111"/><rect x="714.5" y="46.8" width="2.5" height="2.5" fill="#111"/><rect x="707.6" y="49.2" width="2.2" height="2.5" fill="#111"/><rect x="712" y="49.4" width="2.5" height="2.5" fill="#111"/><rect x="716.5" y="49.2" width="2.2" height="2.5" fill="#111"/></g>
<g fill="#4a4a4a"><ellipse cx="914.4" cy="47.8" rx="2.5" ry="3.4"/><path d="M909,56.6 V54 C909,52.6 910.5,51.8 912,51.3 L914.4,52.6 L916.8,51.3 C918.3,51.8 919.6,52.6 919.6,54 V56.6 Z"/><ellipse cx="919.9" cy="45.8" rx="2.3" ry="3.3"/><path d="M918.3,50.6 L920,50.1 C922,50.5 924.9,51.6 924.9,53 V54.8 H920.8 C920.6,53 919.8,51.6 918.3,50.6Z"/></g>
<path d="M1033.9,45.4 L1039.6,49.8 L1033.9,54.2 Z" fill="#2b2b2b"/>
<path d="M11.9,84.9 L19.5,77.4 L27.1,84.9 Z M13.9,83.8 H25.1 V90 H21.4 V86.3 H17.6 V90 H13.9 Z" fill="#4a4a4a"/>
<path d="M323.4,81.6L329.4,87.6M329.4,81.6L323.4,87.6" stroke="#555" stroke-width="1.8"/>
<path d="M698,81.4L705,88.4M705,81.4L698,88.4" stroke="#555" stroke-width="1.8"/>
<path d="M25,121.4 L31.2,116 V119.9 H39.1 V122.9 H31.2 V126.8 Z" fill="#4a4a4a"/>
<path d="M75.1,121.4 L68.9,116 V119.9 H61 V122.9 H68.9 V126.8 Z" fill="#a3a3a3"/>
<path d="M109.30,110.40 L112.18,117.64 L119.95,118.14 L113.96,123.11 L115.88,130.66 L109.30,126.50 L102.72,130.66 L104.64,123.11 L98.65,118.14 L106.42,117.64 Z" fill="none" stroke="#bcbcbc" stroke-width="1"/>
<g fill="none" stroke="#4a4a4a" stroke-width="1.2" stroke-linecap="round" transform="translate(0.4,0.8)"><path d="M956.8,119.2 L955.2,120.8 A3.54,3.54 0 0 0 960.2,125.8 L961.8,124.2"/><path d="M960.2,115.8 L961.8,114.2 A3.54,3.54 0 0 1 966.8,119.2 L965.2,120.8"/><path d="M958.9,122.1 L963.1,117.9"/></g>
<circle cx="991.5" cy="115.9" r="1.3" fill="#707070"/><circle cx="991.5" cy="120.3" r="1.3" fill="#707070"/><circle cx="991.5" cy="124.7" r="1.3" fill="#707070"/>
<path d="M1018,117 L1025.3,124.3 M1025.3,117 L1018,124.3" stroke="#3a3a3a" stroke-width="1.1"/>
<rect x="400.2" y="197" width="9.6" height="14" rx="1.4" fill="#6a8cab"/><rect x="401.2" y="198.1" width="7.6" height="1.6" rx="0.6" fill="#c9dbea"/><rect x="401.2" y="201.4" width="7.6" height="1.6" rx="0.6" fill="#c9dbea"/><rect x="401.2" y="204.7" width="7.6" height="1.6" rx="0.6" fill="#c9dbea"/><rect x="401.2" y="208.0" width="7.6" height="1.6" rx="0.6" fill="#c9dbea"/>
<path d="M584.0999999999999,204.0 H589.5 L586.8,207.0 Z" fill="#4d4d4d"/>
<path d="M634.9,204.0 H640.3000000000001 L637.6,207.0 Z" fill="#4d4d4d"/>
<g><path d="M619.4,210.6 V205.4 C619.4,203.4 621,202.4 623.7,202.4 C626.4,202.4 628,203.4 628,205.4 V210.6Z" fill="#5d7fa6"/><circle cx="623.7" cy="198.6" r="2.5" fill="#e2b48a"/><path d="M621.1,198.4 C621.1,196.4 622.2,195.8 623.7,195.8 C625.2,195.8 626.3,196.4 626.3,198.4 C625.6,197.4 624.6,197.2 623.7,197.2 C622.8,197.2 621.8,197.4 621.1,198.4Z" fill="#3b3a4a"/><path d="M611.8,211.6 V207.6 C611.8,205.4 613.6,204.4 616.6,204.4 C619.6,204.4 621.4,205.4 621.4,207.6 V211.6Z" fill="#6b8db3"/><path d="M616.1,204.6 L616.6,209.8 L617.1,204.6Z" fill="#d34a3a"/><circle cx="616.6" cy="201" r="2.5" fill="#e6b98e"/><path d="M614,200.8 C614,198.8 615.1,198.2 616.6,198.2 C618.1,198.2 619.2,198.8 619.2,200.8 C618.5,199.8 617.5,199.6 616.6,199.6 C615.7,199.6 614.7,199.8 614,200.8Z" fill="#7a4a28"/><path d="M622.6,203.4 H625.6 V206.2 H628.6 V209.2 H625.6 V212.2 H622.6 V209.2 H619.6 V206.2 H622.6Z" fill="#27a845"/></g>
<path d="M685.5,204.0 H690.9000000000001 L688.2,207.0 Z" fill="#4d4d4d"/>
<g><path d="M664.5,197.4 H672.2 L676,201.2 V210.4 H664.5 Z" fill="#f1dc8e" stroke="#c8a44a" stroke-width="0.9"/><path d="M672.2,197.4 V201.2 H676" fill="#fff2c0" stroke="#c8a44a" stroke-width="0.8"/><path d="M666.3,202.5H670.5M666.3,204.6H670M666.3,206.7H669" stroke="#c3a35a" stroke-width="0.8"/><circle cx="674.5" cy="207.8" r="4.3" fill="#f4f8fc" stroke="#4f86c6" stroke-width="1.1"/><circle cx="674.5" cy="204.9" r="0.6" fill="#e03a2a"/><circle cx="674.5" cy="210.7" r="0.6" fill="#e03a2a"/><circle cx="671.6" cy="207.8" r="0.6" fill="#e03a2a"/><circle cx="677.4" cy="207.8" r="0.6" fill="#e03a2a"/><path d="M674.5,207.8 L676.2,206.1" stroke="#4f86c6" stroke-width="0.8"/></g>
<g><path d="M715.6,197.4 C715,198.4 714.8,199.8 715.2,201 C715.7,202.6 717,203.4 718.4,203.8 V210.6 C718.4,211.3 718.9,211.7 719.6,211.7 C720.3,211.7 720.8,211.3 720.8,210.6 V203.8 C722.2,203.4 723.5,202.6 724,201 C724.4,199.8 724.2,198.4 723.6,197.4 L722.2,197.4 V200.8 L721.2,201.8 H718 L717,200.8 V197.4 Z" fill="#bdbdbd" stroke="#6f6f6f" stroke-width="0.8"/><rect x="726.6" y="196.2" width="1.3" height="6.6" fill="#4a4a4a"/><rect x="725.6" y="202.6" width="3.3" height="8.8" rx="0.9" fill="#3f78bf"/></g>
<g><path d="M757.6,202 V197.5 H762.8 L764.4,199.1 V202" fill="#fff" stroke="#5d7590" stroke-width="0.9"/><rect x="754.6" y="202.4" width="12.8" height="6.1" rx="1.4" fill="#86aad3" stroke="#284c76" stroke-width="1"/><path d="M756.2,204.5 H765.8" stroke="#34557d" stroke-width="0.8"/><circle cx="763.5" cy="203.6" r="0.5" fill="#fff"/><circle cx="765.3" cy="203.6" r="0.5" fill="#fff"/><rect x="757.9" y="205.4" width="6.6" height="5.1" fill="#fff" stroke="#5d7590" stroke-width="0.9"/></g>
<path d="M824.5999999999999,204.0 H830.0 L827.3,207.0 Z" fill="#4d4d4d"/>
<path d="M977.8,204.0 H983.2 L980.5,207.0 Z" fill="#4d4d4d"/>
<path d="M295.8,238.9 H301.2 L298.5,241.9 Z" fill="#4d4d4d"/>
<g fill="none" stroke="#333" stroke-width="1.1"><rect x="319.05" y="236.55" width="4.9" height="4.9"/><path d="M318.0,239.55 H316.05 V244.45 H320.95 V242.5"/></g>
<circle cx="424.8" cy="236.6" r="5.2" fill="#eef0f3" stroke="#8e99a5" stroke-width="1.2"/><rect x="424.1" y="235.4" width="1.6" height="3.9" fill="#1f5a9e"/><rect x="423.2" y="235.4" width="1.2" height="0.9" fill="#1f5a9e"/><rect x="423.1" y="239" width="3.6" height="1" fill="#1f5a9e"/><rect x="424.1" y="232.8" width="1.6" height="1.5" fill="#1f5a9e"/>
<g fill="none" stroke="#333" stroke-width="1.1"><rect x="1013.05" y="236.05" width="4.9" height="4.9"/><path d="M1012.0,239.05 H1010.05 V243.95 H1014.95 V242.0"/></g>
<rect x="446.7" y="271.4" width="7.6" height="8.2" rx="1.1" fill="#fff" stroke="#444" stroke-width="1"/><rect x="446.2" y="270.9" width="8.6" height="2.8" rx="1" fill="#444"/><circle cx="448.5" cy="270.79999999999995" r="0.8" fill="#444"/><circle cx="452.5" cy="270.79999999999995" r="0.8" fill="#444"/><rect x="448.09999999999997" y="271.4" width="0.9" height="1.1" fill="#fff"/><rect x="452.09999999999997" y="271.4" width="0.9" height="1.1" fill="#fff"/><circle cx="448.5" cy="275.4" r="0.6" fill="#444"/><circle cx="448.5" cy="277.4" r="0.6" fill="#444"/><circle cx="450.5" cy="275.4" r="0.6" fill="#444"/><circle cx="450.5" cy="277.4" r="0.6" fill="#444"/><circle cx="452.5" cy="275.4" r="0.6" fill="#444"/><circle cx="452.5" cy="277.4" r="0.6" fill="#444"/>
<path d="M427.8,307.5 H433.2 L430.5,310.5 Z" fill="#4d4d4d"/>
<rect x="447.5" y="313.0" width="1.2" height="1.2" fill="#555"/><rect x="450.5" y="313.0" width="1.2" height="1.2" fill="#555"/><rect x="453.5" y="313.0" width="1.2" height="1.2" fill="#555"/>
<g fill="none" stroke="#333" stroke-width="1.1"><rect x="472.55" y="305.55" width="4.9" height="4.9"/><path d="M471.5,308.55 H469.55 V313.45 H474.45 V311.5"/></g>
<path d="M469.8,341.5 H475.2 L472.5,344.5 Z" fill="#4d4d4d"/>
<path d="M427.8,375.5 H433.2 L430.5,378.5 Z" fill="#4d4d4d"/>
<rect x="447.5" y="381.0" width="1.2" height="1.2" fill="#555"/><rect x="450.5" y="381.0" width="1.2" height="1.2" fill="#555"/><rect x="453.5" y="381.0" width="1.2" height="1.2" fill="#555"/>
<g fill="none" stroke="#333" stroke-width="1.1"><rect x="472.55" y="373.55" width="4.9" height="4.9"/><path d="M471.5,376.55 H469.55 V381.45 H474.45 V379.5"/></g>
<path d="M972.8,273.5 H978.2 L975.5,276.5 Z" fill="#4d4d4d"/>
<rect x="992.5" y="279.0" width="1.2" height="1.2" fill="#555"/><rect x="995.5" y="279.0" width="1.2" height="1.2" fill="#555"/><rect x="998.5" y="279.0" width="1.2" height="1.2" fill="#555"/>
<g fill="none" stroke="#333" stroke-width="1.1"><rect x="1016.55" y="271.55" width="4.9" height="4.9"/><path d="M1015.5,274.55 H1013.55 V279.45 H1018.45 V277.5"/></g>
<rect x="992.5" y="313.0" width="1.2" height="1.2" fill="#555"/><rect x="995.5" y="313.0" width="1.2" height="1.2" fill="#555"/><rect x="998.5" y="313.0" width="1.2" height="1.2" fill="#555"/>
<g fill="none" stroke="#333" stroke-width="1.1"><rect x="1016.55" y="305.55" width="4.9" height="4.9"/><path d="M1015.5,308.55 H1013.55 V313.45 H1018.45 V311.5"/></g>
<rect x="716.4" y="339.1" width="7.6" height="8.2" rx="1.1" fill="#fff" stroke="#444" stroke-width="1"/><rect x="715.9" y="338.6" width="8.6" height="2.8" rx="1" fill="#444"/><circle cx="718.1999999999999" cy="338.5" r="0.8" fill="#444"/><circle cx="722.1999999999999" cy="338.5" r="0.8" fill="#444"/><rect x="717.8" y="339.1" width="0.9" height="1.1" fill="#fff"/><rect x="721.8" y="339.1" width="0.9" height="1.1" fill="#fff"/><circle cx="718.2" cy="343.1" r="0.6" fill="#444"/><circle cx="718.2" cy="345.1" r="0.6" fill="#444"/><circle cx="720.2" cy="343.1" r="0.6" fill="#444"/><circle cx="720.2" cy="345.1" r="0.6" fill="#444"/><circle cx="722.2" cy="343.1" r="0.6" fill="#444"/><circle cx="722.2" cy="345.1" r="0.6" fill="#444"/>
<path d="M972.8,341.5 H978.2 L975.5,344.5 Z" fill="#4d4d4d"/>
<rect x="992.5" y="347.0" width="1.2" height="1.2" fill="#555"/><rect x="995.5" y="347.0" width="1.2" height="1.2" fill="#555"/><rect x="998.5" y="347.0" width="1.2" height="1.2" fill="#555"/>
<g fill="none" stroke="#333" stroke-width="1.1"><rect x="1016.55" y="339.55" width="4.9" height="4.9"/><path d="M1015.5,342.55 H1013.55 V347.45 H1018.45 V345.5"/></g>
<path d="M972.8,375.5 H978.2 L975.5,378.5 Z" fill="#4d4d4d"/>
<rect x="992.5" y="381.0" width="1.2" height="1.2" fill="#555"/><rect x="995.5" y="381.0" width="1.2" height="1.2" fill="#555"/><rect x="998.5" y="381.0" width="1.2" height="1.2" fill="#555"/>
<g fill="none" stroke="#333" stroke-width="1.1"><rect x="1016.55" y="373.55" width="4.9" height="4.9"/><path d="M1015.5,376.55 H1013.55 V381.45 H1018.45 V379.5"/></g>
<path d="M142.6,442.2 L148.1,448.4 H145.2 V453.4 H140.2 V448.4 H137.1 Z" fill="#4db0ea" stroke="#2b80c4" stroke-width="0.9" stroke-linejoin="round"/>
<path d="M171.6,453.4 L177.1,447.6 H174.1 V442.4 H169.1 V447.6 H166.1 Z" fill="#4db0ea" stroke="#2b80c4" stroke-width="0.9" stroke-linejoin="round"/>
<path d="M290.90000000000003,448.1 H296.3 L293.6,451.1 Z" fill="#4d4d4d"/>
<g fill="#222"><rect x="320" y="440.7" width="1.2" height="11.3"/><rect x="322.2" y="440.7" width="0.8" height="11.3"/><rect x="323.8" y="440.7" width="1.4" height="11.3"/><rect x="326.2" y="440.7" width="0.8" height="11.3"/><rect x="327.8" y="440.7" width="1.2" height="11.3"/><rect x="330.2" y="440.7" width="0.8" height="11.3"/><rect x="332.2" y="440.7" width="1.4" height="11.3"/></g><circle cx="327.4" cy="449.6" r="3.3" fill="#bcd7f2" stroke="#b38a64" stroke-width="1.1"/><path d="M329.7,452 L332.2,455.6" stroke="#b38a64" stroke-width="1.6"/>
<path d="M358.6,443.8 C358.4,442.8 359,442.2 360,441.8 L363.6,440.6 C364.4,440.4 365,440.6 365.4,441.2 L373.2,451 C373.6,451.6 373.4,452.4 372.6,452.9 L370.6,454.2 C369.8,454.6 369,454.4 368.6,453.8 Z" fill="#2e2a25"/><path d="M359.8,443.4 L363.9,441.9 L365.4,443.9 L361.3,445.5 Z" fill="#b9b2a2"/><circle cx="365.6" cy="446.6" r="1" fill="#f0b400"/><circle cx="363.9" cy="447.8" r="0.6" fill="#5a8fb8"/><circle cx="367.3" cy="445.6" r="0.6" fill="#5a8fb8"/>
<rect x="397.6" y="440.8" width="13.6" height="13.4" rx="1" fill="none" stroke="#2c4a66" stroke-width="1.3"/><path d="M404.5,444.4 V446.6 M404.5,448.2 V450.4" stroke="#2c4a66" stroke-width="1.2"/><path d="M402,445.2 L404.5,442.3 L407,445.2 Z M402,449.6 L404.5,452.5 L407,449.6 Z" fill="#2c4a66"/>
<path d="M1005.9,448.2 H1011.3000000000001 L1008.6,451.2 Z" fill="#4d4d4d"/>
<defs><linearGradient id="lg1" x1="0" y1="0" x2="0" y2="1"><stop offset="0" stop-color="#a6d0f6"/><stop offset="1" stop-color="#3a88de"/></linearGradient><linearGradient id="lg2" x1="0" y1="0" x2="0" y2="1"><stop offset="0" stop-color="#dcdcdc"/><stop offset="1" stop-color="#a9a9a9"/></linearGradient></defs><rect x="102" y="504.3" width="11.9" height="8.4" fill="url(#lg1)" stroke="#8a9aae" stroke-width="0.5"/><path d="M101.6,512.7 H114.4 L115.9,517.3 V518 H100.1 V517.3 Z" fill="url(#lg2)"/><path d="M100.1,517.6 H115.9" stroke="#8c8c8c" stroke-width="0.8"/>
<path d="M38.2,842 L34,845 L38.2,848 Z" fill="#c4c4c4"/><path d="M1004,842 L1008.2,845 L1004,848 Z" fill="#333"/>
<circle cx="20.4" cy="912.7" r="3.3" fill="#3e2410"/><ellipse cx="20.4" cy="913.5" rx="2.7" ry="2.9" fill="#eca85a"/><path d="M15.8,921 V918.6 C15.8,916.8 17.6,916.2 20.4,916.2 C23.2,916.2 25,916.8 25,918.6 V921 Z" fill="#2d8fc7"/><path d="M19.6,916.2 L20.4,918 L21.2,916.2Z" fill="#fff"/>
<rect x="852.6" y="911.6" width="12" height="9.2" fill="#f4f6f9" stroke="#7f8ea0" stroke-width="1.1"/><path d="M854.6,914H862.6M854.6,916.2H862.6M854.6,918.4H860.6" stroke="#8794a4" stroke-width="0.9"/><path d="M859.8,920.2 L862,922.4 L866.4,917.8" fill="none" stroke="#2fae3c" stroke-width="1.8"/></svg>
</body></html>
